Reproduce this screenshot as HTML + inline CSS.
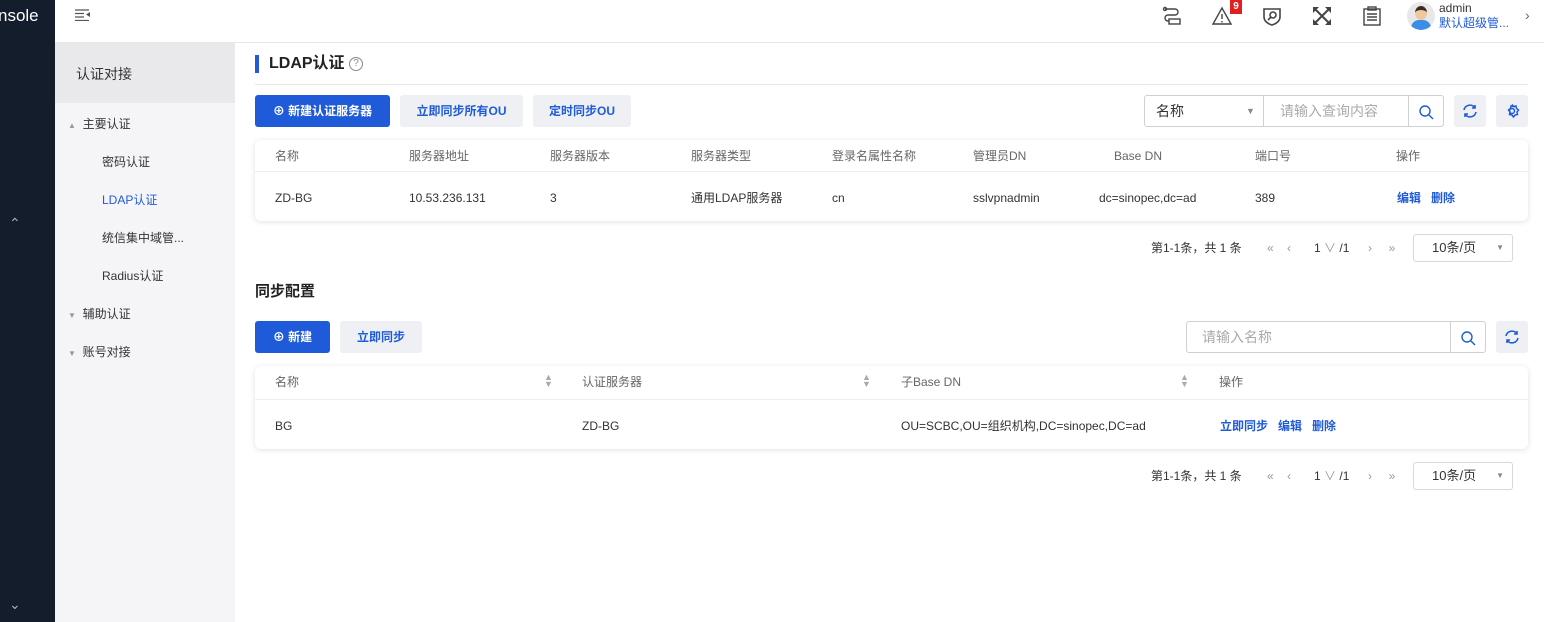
<!DOCTYPE html>
<html><head><meta charset="utf-8"><style>
*{box-sizing:border-box;margin:0;padding:0}
body{width:1544px;height:622px;overflow:hidden;background:#fff;font-family:"Liberation Sans","Noto Sans CJK SC",sans-serif;font-size:12px;color:#333;position:relative;line-height:16px}
.abs{position:absolute}
.dark{left:0;top:0;width:55px;height:622px;background:#131d2b}
.hdr{left:55px;top:0;width:1489px;height:43px;border-bottom:1px solid #e8e8e8;background:#fff}
.side{left:55px;top:43px;width:180px;height:579px;background:#f5f5f7}
.btn{position:absolute;height:32px;line-height:32px;border-radius:3px;font-size:12px;text-align:center;font-weight:bold}
.pri{background:#1f5bd8;color:#fff}
.sec{background:#eef0f3;color:#1f5bd8}
.card{position:absolute;left:255px;width:1273px;background:#fff;box-shadow:0 1px 6px rgba(0,0,0,.12);border-radius:6px}
.th{position:absolute;color:#666;font-size:12px;line-height:16px}
.td{position:absolute;color:#333;font-size:12px;line-height:16px}
.lnk{color:#1f5bd8;font-weight:bold}
.pg{position:absolute;font-size:12px;color:#333;line-height:16px}
.sel{position:absolute;border:1px solid #d9d9d9;border-radius:3px;height:28px;line-height:26px;padding-left:18px;font-size:13px}
.ib{position:absolute;width:32px;height:32px;background:#eef0f3;border-radius:3px}
</style></head><body>
<div class="abs dark"></div>
<div class="abs" style="left:-2px;top:6px;color:#fff;font-size:17px;line-height:20px">nsole</div>
<div class="abs" style="left:9px;top:215px;color:#aab;font-size:14px">&#8963;</div>
<div class="abs" style="left:9px;top:596px;color:#aab;font-size:14px">&#8964;</div>
<div class="abs hdr"></div>
<svg class="abs" style="left:75px;top:9px" width="16" height="12" viewBox="0 0 16 12"><g stroke="#555" stroke-width="1.2"><path d="M0 1h14M0 4.5h9M0 8h9M0 11.5h14"/></g><path d="M15 3v5l-4-2.5z" fill="#555"/></svg>
<svg class="abs" style="left:1162px;top:6px" width="20" height="20" viewBox="0 0 20 20" fill="none" stroke="#444" stroke-width="1.4"><path d="M3 3h10a3 3 0 0 1 0 6H6a3 3 0 0 0 0 6h1"/><circle cx="3" cy="3" r="1.5"/><rect x="7" y="13" width="11" height="5"/></svg>
<svg class="abs" style="left:1212px;top:6px" width="20" height="20" viewBox="0 0 20 20" fill="none" stroke="#444" stroke-width="1.4"><path d="M10 2L1 18h18z"/><path d="M10 8v5M10 15v1.5"/></svg>
<div class="abs" style="left:1230px;top:0;width:12px;height:14px;background:#e02020;color:#fff;font-size:10px;text-align:center;line-height:14px;font-weight:bold">9</div>
<svg class="abs" style="left:1263px;top:6px" width="18" height="20" viewBox="0 0 18 20" fill="none" stroke="#444" stroke-width="1.6"><path d="M1 3h16v8c0 4-4 7-8 8-4-1-8-4-8-8z"/><circle cx="10" cy="9" r="3"/><path d="M8 11l-3 3"/></svg>
<svg class="abs" style="left:1312px;top:6px" width="20" height="20" viewBox="0 0 20 20" fill="#444"><path d="M1 1h6L1 7zM19 1h-6l6 6zM1 19h6L1 13zM19 19h-6l6-6z"/><path d="M3 3l14 14M17 3L3 17" stroke="#444" stroke-width="2"/></svg>
<svg class="abs" style="left:1363px;top:6px" width="18" height="20" viewBox="0 0 18 20" fill="none" stroke="#444" stroke-width="1.4"><rect x="1" y="3" width="16" height="16"/><rect x="5" y="1" width="8" height="3"/><path d="M4 8h10M4 11h10M4 14h10"/></svg>
<div class="abs" style="left:1407px;top:2px;width:28px;height:28px;border-radius:50%;background:#e8e8e8;overflow:hidden"><div class="abs" style="left:8px;top:4px;width:12px;height:14px;border-radius:50%;background:#f1c7a0;border-top:4px solid #3a2a20"></div><div class="abs" style="left:4px;top:18px;width:20px;height:12px;border-radius:8px 8px 0 0;background:#3a8ee6"></div></div>
<div class="abs" style="left:1439px;top:0px;font-size:12px;color:#333">admin</div>
<div class="abs" style="left:1439px;top:15px;font-size:12px;color:#1f5bd8">默认超级管...</div>
<div class="abs" style="left:1525px;top:7px;font-size:14px;color:#666">&#8250;</div>
<div class="abs side"></div>
<div class="abs" style="left:55px;top:43px;width:180px;height:60px;background:#e9e9ec"></div>
<div class="abs" style="left:76px;top:65px;font-size:14px;color:#333;line-height:18px">认证对接</div>
<div class="abs" style="left:68px;top:116px;font-size:12px;color:#333"><span style="font-size:8px;color:#999">▲</span>&nbsp; 主要认证</div>
<div class="abs" style="left:102px;top:154px;font-size:12px">密码认证</div>
<div class="abs" style="left:102px;top:192px;font-size:12px;color:#1f5bd8">LDAP认证</div>
<div class="abs" style="left:102px;top:230px;font-size:12px">统信集中域管...</div>
<div class="abs" style="left:102px;top:268px;font-size:12px">Radius认证</div>
<div class="abs" style="left:68px;top:306px;font-size:12px"><span style="font-size:8px;color:#999">▼</span>&nbsp; 辅助认证</div>
<div class="abs" style="left:68px;top:344px;font-size:12px"><span style="font-size:8px;color:#999">▼</span>&nbsp; 账号对接</div>
<div class="abs" style="left:255px;top:55px;width:4px;height:18px;background:#1f5bd8"></div>
<div class="abs" style="left:269px;top:54px;font-size:16px;font-weight:bold;color:#222;line-height:20px">LDAP认证</div>
<div class="abs" style="left:349px;top:57px;width:14px;height:14px;border:1px solid #888;border-radius:50%;font-size:10px;text-align:center;line-height:12px;color:#888">?</div>
<div class="abs" style="left:255px;top:84px;width:1273px;height:1px;background:#e8e8e8"></div>
<div class="btn pri" style="left:255px;top:95px;width:135px">⊕ 新建认证服务器</div>
<div class="btn sec" style="left:400px;top:95px;width:123px">立即同步所有OU</div>
<div class="btn sec" style="left:533px;top:95px;width:98px">定时同步OU</div>
<div class="abs" style="left:1144px;top:95px;width:300px;height:32px;border:1px solid #d0d0d0;border-radius:3px"></div>
<div class="abs" style="left:1156px;top:102px;font-size:14px;line-height:18px">名称</div>
<div class="abs" style="left:1246px;top:103px;font-size:9px;color:#888">▼</div>
<div class="abs" style="left:1263px;top:96px;width:1px;height:30px;background:#d0d0d0"></div>
<div class="abs" style="left:1280px;top:102px;font-size:14px;color:#aaa;line-height:18px">请输入查询内容</div>
<div class="abs" style="left:1408px;top:96px;width:1px;height:30px;background:#d0d0d0"></div>
<svg class="abs" style="left:1418px;top:104px" width="16" height="16" viewBox="0 0 16 16" fill="none" stroke="#1f5bd8" stroke-width="1.4"><circle cx="7" cy="7" r="5"/><path d="M11 11l4 4"/></svg>
<div class="ib" style="left:1454px;top:95px"></div>
<svg class="abs" style="left:1462px;top:103px" width="16" height="16" viewBox="0 0 16 16" fill="none" stroke="#1f5bd8" stroke-width="1.6"><path d="M2 7a6 6 0 0 1 11-2M14 9a6 6 0 0 1-11 2"/><path d="M13 2v3h-3M3 14v-3h3"/></svg>
<div class="ib" style="left:1496px;top:95px"></div>
<svg class="abs" style="left:1504px;top:103px" width="16" height="16" viewBox="0 0 16 16" fill="none" stroke="#1f5bd8" stroke-width="1.5"><circle cx="8" cy="8" r="2.5"/><path d="M8 1.5l1.5 2 2.5-.5.5 2.5 2 1.5-1.5 2 .5 2.5-2.5.5-1.5 2-1.5-2-2.5-.5.5-2.5-1.5-2 2-1.5.5-2.5 2.5.5z"/></svg>
<div class="card" style="top:140px;height:81px"></div>
<div class="abs" style="left:255px;top:171px;width:1273px;height:1px;background:#eee"></div>
<div class="th" style="left:275px;top:148px">名称</div>
<div class="th" style="left:409px;top:148px">服务器地址</div>
<div class="th" style="left:550px;top:148px">服务器版本</div>
<div class="th" style="left:691px;top:148px">服务器类型</div>
<div class="th" style="left:832px;top:148px">登录名属性名称</div>
<div class="th" style="left:973px;top:148px">管理员DN</div>
<div class="th" style="left:1114px;top:148px">Base DN</div>
<div class="th" style="left:1255px;top:148px">端口号</div>
<div class="th" style="left:1396px;top:148px">操作</div>
<div class="td" style="left:275px;top:190px">ZD-BG</div>
<div class="td" style="left:409px;top:190px">10.53.236.131</div>
<div class="td" style="left:550px;top:190px">3</div>
<div class="td" style="left:691px;top:190px">通用LDAP服务器</div>
<div class="td" style="left:832px;top:190px">cn</div>
<div class="td" style="left:973px;top:190px">sslvpnadmin</div>
<div class="td" style="left:1099px;top:190px">dc=sinopec,dc=ad</div>
<div class="td" style="left:1255px;top:190px">389</div>
<div class="td lnk" style="left:1397px;top:190px">编辑&nbsp;&nbsp; 删除</div>
<div class="pg" style="left:1151px;top:240px">第1-1条，共 1 条</div>
<div class="pg" style="left:1267px;top:240px;color:#999">«&nbsp;&nbsp;&nbsp; ‹</div>
<div class="pg" style="left:1314px;top:240px">1 <span style="color:#999">∨</span> /1</div>
<div class="pg" style="left:1368px;top:240px;color:#999">›&nbsp;&nbsp;&nbsp;&nbsp; »</div>
<div class="sel" style="left:1413px;top:234px;width:100px">10条/页<span style="position:absolute;right:8px;font-size:8px;color:#888">▼</span></div>
<div class="abs" style="left:255px;top:283px;font-size:15px;font-weight:bold;color:#222;line-height:18px">同步配置</div>
<div class="btn pri" style="left:255px;top:321px;width:75px">⊕ 新建</div>
<div class="btn sec" style="left:340px;top:321px;width:82px">立即同步</div>
<div class="abs" style="left:1186px;top:321px;width:300px;height:32px;border:1px solid #d0d0d0;border-radius:3px"></div>
<div class="abs" style="left:1202px;top:328px;font-size:14px;color:#aaa;line-height:18px">请输入名称</div>
<div class="abs" style="left:1450px;top:322px;width:1px;height:30px;background:#d0d0d0"></div>
<svg class="abs" style="left:1460px;top:330px" width="16" height="16" viewBox="0 0 16 16" fill="none" stroke="#1f5bd8" stroke-width="1.4"><circle cx="7" cy="7" r="5"/><path d="M11 11l4 4"/></svg>
<div class="ib" style="left:1496px;top:321px"></div>
<svg class="abs" style="left:1504px;top:329px" width="16" height="16" viewBox="0 0 16 16" fill="none" stroke="#1f5bd8" stroke-width="1.6"><path d="M2 7a6 6 0 0 1 11-2M14 9a6 6 0 0 1-11 2"/><path d="M13 2v3h-3M3 14v-3h3"/></svg>
<div class="card" style="top:366px;height:83px"></div>
<div class="abs" style="left:255px;top:399px;width:1273px;height:1px;background:#eee"></div>
<div class="th" style="left:275px;top:374px">名称</div>
<div class="th" style="left:544px;top:374px;font-size:9px;color:#aaa;line-height:7px">▲<br>▼</div>
<div class="th" style="left:582px;top:374px">认证服务器</div>
<div class="th" style="left:862px;top:374px;font-size:9px;color:#aaa;line-height:7px">▲<br>▼</div>
<div class="th" style="left:901px;top:374px">子Base DN</div>
<div class="th" style="left:1180px;top:374px;font-size:9px;color:#aaa;line-height:7px">▲<br>▼</div>
<div class="th" style="left:1219px;top:374px">操作</div>
<div class="td" style="left:275px;top:418px">BG</div>
<div class="td" style="left:582px;top:418px">ZD-BG</div>
<div class="td" style="left:901px;top:418px">OU=SCBC,OU=组织机构,DC=sinopec,DC=ad</div>
<div class="td lnk" style="left:1220px;top:418px">立即同步&nbsp;&nbsp; 编辑&nbsp;&nbsp; 删除</div>
<div class="pg" style="left:1151px;top:468px">第1-1条，共 1 条</div>
<div class="pg" style="left:1267px;top:468px;color:#999">«&nbsp;&nbsp;&nbsp; ‹</div>
<div class="pg" style="left:1314px;top:468px">1 <span style="color:#999">∨</span> /1</div>
<div class="pg" style="left:1368px;top:468px;color:#999">›&nbsp;&nbsp;&nbsp;&nbsp; »</div>
<div class="sel" style="left:1413px;top:462px;width:100px">10条/页<span style="position:absolute;right:8px;font-size:8px;color:#888">▼</span></div>
</body></html>
